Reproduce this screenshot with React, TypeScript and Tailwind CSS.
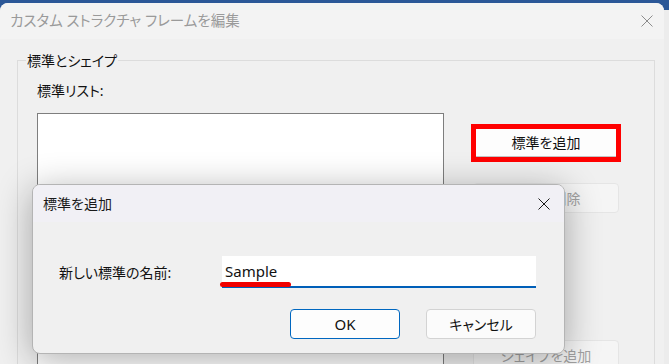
import React from "react";

const jp = "font-['Noto_Sans','Noto_Sans_CJK_JP',sans-serif] [font-feature-settings:'palt']";

function CloseIcon({ className }: { className: string }) {
  return (
    <svg width="12" height="12" viewBox="0 0 12 12" className={className}>
      <path d="M0.5 0.5 L11.5 11.5 M11.5 0.5 L0.5 11.5" stroke="currentColor" strokeWidth="1" fill="none" />
    </svg>
  );
}

function DisabledButton({ label }: { label: string }) {
  return (
    <div className="h-[30px] w-[146px] rounded-[4px] border border-[#e5e5e5] bg-[#f5f5f5] flex items-center justify-center text-[14px] text-[#a2a2a2]">
      {label}
    </div>
  );
}

export default function App() {
  return (
    <div
      className={`relative w-[669px] h-[364px] overflow-hidden bg-[linear-gradient(#2b5797_0_10px,#ececec_10px)] pt-[3px] ${jp}`}
    >
      {/* main window */}
      <div className="w-[664px] h-[361px] rounded-t-[8px] overflow-hidden bg-[#f0f0f0] flex flex-col">
        <div className="h-[36px] shrink-0 bg-[#f3f3f3] flex items-center justify-between pl-[10px] pr-[11px]">
          <span className="text-[14.5px] text-[#9a9a9a]">カスタム ストラクチャ フレームを編集</span>
          <CloseIcon className="text-[#8c8c8c]" />
        </div>

        <fieldset className="ml-[17px] mr-[9px] mt-[13px] border border-[#dcdcdc] px-0 pb-0 min-h-[320px]">
          <legend className="ml-[8px] px-[1px] text-[14px] text-[#111] leading-[17px]">標準とシェイプ</legend>
          <div className="pl-[19px] pt-[13px]">
            <div className="text-[14px] text-[#111] leading-[18px]">標準リスト:</div>
            <div className="flex mt-[13px] gap-[29px]">
              <div className="w-[407px] h-[260px] bg-white border border-[#7e7e7e]" />
              <div className="flex flex-col pt-[11px]">
                <div className="-mx-[2px] border-[5px] border-[#ff0000] h-[38px]">
                  <div className="h-[28px] bg-[#fdfdfd] border-b border-[#c4c4c4] flex items-center justify-center text-[14px] text-[#111]">
                    標準を追加
                  </div>
                </div>
                <div className="mt-[21px]">
                  <DisabledButton label="標準を削除" />
                </div>
                <div className="mt-[127px]">
                  <DisabledButton label="シェイプを追加" />
                </div>
              </div>
            </div>
          </div>
        </fieldset>
      </div>

      {/* modal dialog */}
      <div className="absolute left-[32px] top-[184px] w-[533px] h-[170px] rounded-[8px] overflow-hidden border border-[#b4b4b4] bg-[#f0f0f0] shadow-[0_6px_36px_rgba(0,0,0,0.32)] flex flex-col">
        <div className="h-[37px] shrink-0 bg-[#f1f0f5] flex items-center justify-between pl-[10px] pr-[14px]">
          <span className="text-[14px] text-[#1a1a1a]">標準を追加</span>
          <CloseIcon className="text-[#1a1a1a]" />
        </div>
        <div className="flex-1 flex flex-col pt-[34px] pl-[26px] pr-[28px]">
          <div className="flex items-center">
            <span className="w-[163px] text-[14px] text-[#111]">新しい標準の名前:</span>
            <div className="relative w-[314px] h-[32px] bg-white border-b-2 border-[#005fb8] flex items-center pl-[3px] text-[15px] text-[#111]">
              Sample
              <div className="absolute left-[-2px] bottom-[-1px] w-[71px] h-[5px] rounded-full bg-[#f00000]" />
            </div>
          </div>
          <div className="flex justify-end gap-[26px] mt-[21px]">
            <button className="w-[110px] h-[30px] rounded-[4px] border border-[#0067c0] bg-[#fdfdfd] text-[15px] text-[#111]">
              OK
            </button>
            <button className="w-[110px] h-[30px] rounded-[4px] border border-[#d3d3d3] bg-[#fbfbfb] text-[14px] text-[#111]">
              キャンセル
            </button>
          </div>
        </div>
      </div>
    </div>
  );
}
